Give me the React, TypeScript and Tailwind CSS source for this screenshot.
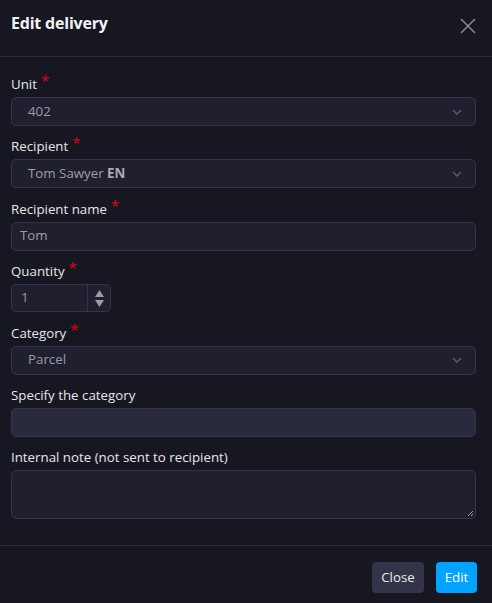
import React from 'react';

function Req() {
  return <span className="ml-1 text-[#e0001a] text-[15px] leading-none relative top-[-3px]">*</span>;
}

function Label({ children, required }: { children: React.ReactNode; required?: boolean }) {
  return (
    <label className="block text-[13.3px] leading-[20px] text-[#e6e6ea] mb-[3px]">
      {children}
      {required && <Req />}
    </label>
  );
}

function Chevron() {
  return (
    <svg width="12" height="12" viewBox="0 0 12 12" className="text-[#5c5c70]">
      <path d="M2 4l4 4 4-4" fill="none" stroke="currentColor" strokeWidth="1.3" />
    </svg>
  );
}

function Select({ children }: { children: React.ReactNode }) {
  return (
    <div className="h-[29px] flex items-center justify-between rounded-[5px] border border-[#33334a] bg-[#1f1f2d] pl-[16px] pr-[12px] text-[13.3px] text-[#9c9cab]">
      <span>{children}</span>
      <Chevron />
    </div>
  );
}

export default function App() {
  return (
    <div
      className="w-[492px] h-[603px] bg-[#171722] flex flex-col"
      style={{ fontFamily: '"Open Sans", "Noto Sans", sans-serif' }}
    >
      <div className="h-[57px] flex items-center justify-between pl-[11px] pr-[16px] border-b border-[#2c2c3c] shrink-0">
        <h2 className="text-[16px] font-bold text-[#f2f2f5] tracking-[-0.2px] -mt-[10px]">Edit delivery</h2>
        <svg width="16" height="16" viewBox="0 0 16 16" className="text-[#8a8a98] -mt-[4px]">
          <path d="M1 1l14 14M15 1L1 15" stroke="currentColor" strokeWidth="1.5" />
        </svg>
      </div>

      <div className="flex-1 pl-[11px] pr-[16px] pt-[17px] flex flex-col gap-[10.4px]">
        <div>
          <Label required>Unit</Label>
          <Select>402</Select>
        </div>
        <div>
          <Label required>Recipient</Label>
          <Select>
            Tom Sawyer <b className="font-bold text-[#a8a8b6]">EN</b>
          </Select>
        </div>
        <div>
          <Label required>Recipient name</Label>
          <div className="h-[29px] flex items-center rounded-[5px] border border-[#33334a] bg-[#1f1f2d] px-[8px] text-[13.3px] text-[#9c9cab]">
            Tom
          </div>
        </div>
        <div>
          <Label required>Quantity</Label>
          <div className="w-[100px] h-[28px] flex rounded-[5px] border border-[#33334a] bg-[#1f1f2d] text-[13.3px] text-[#9c9cab]">
            <div className="flex-1 flex items-center px-[9px]">1</div>
            <div className="w-[23px] border-l border-[#33334a] flex flex-col items-center justify-center gap-[3px]">
              <svg width="9" height="7" viewBox="0 0 9 7">
                <path d="M4.5 0L9 7H0z" fill="#9a9aa8" />
              </svg>
              <svg width="9" height="7" viewBox="0 0 9 7">
                <path d="M0 0h9L4.5 7z" fill="#9a9aa8" />
              </svg>
            </div>
          </div>
        </div>
        <div>
          <Label required>Category</Label>
          <Select>Parcel</Select>
        </div>
        <div>
          <Label>Specify the category</Label>
          <div className="h-[29px] rounded-[5px] border border-[#33334a] bg-[#2a2a3f]" />
        </div>
        <div>
          <Label>Internal note (not sent to recipient)</Label>
          <div className="relative h-[49px] rounded-[5px] border border-[#33334a] bg-[#1f1f2d]">
            <svg width="8" height="8" viewBox="0 0 8 8" className="absolute right-[1px] bottom-[1px]">
              <path d="M7 2L2 7M7 5L5 7" stroke="#9a9aa8" strokeWidth="1" />
            </svg>
          </div>
        </div>
      </div>

      <div className="h-[58px] border-t border-[#2c2c3c] flex items-start justify-end gap-[12px] pr-[15px] pt-[16px] shrink-0">
        <button className="h-[31px] w-[52px] rounded-[4px] bg-[#33334a] text-[13.3px] text-[#ececf0]">Close</button>
        <button className="h-[31px] w-[41px] rounded-[4px] bg-[#00a3ff] text-[13.3px] text-white">Edit</button>
      </div>
    </div>
  );
}
